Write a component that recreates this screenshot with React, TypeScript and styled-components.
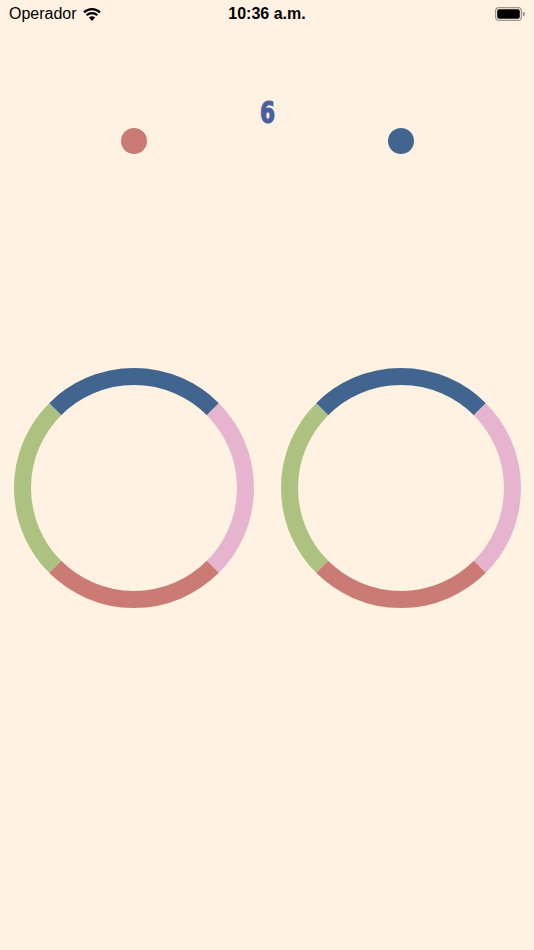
import React from "react";
import styled, { createGlobalStyle } from "styled-components";

const GlobalStyle = createGlobalStyle`
  html, body {
    margin: 0;
    padding: 0;
    background: #fff2e3;
  }
  body {
    font-family: "Liberation Sans", Arial, sans-serif;
  }
`;

const Screen = styled.div`
  width: 534px;
  height: 950px;
  background: #fff2e3;
  display: flex;
  flex-direction: column;
  overflow: hidden;
`;

const StatusBar = styled.div`
  height: 28px;
  display: grid;
  grid-template-columns: 1fr auto 1fr;
  align-items: center;
  padding: 0 9px;
  font-size: 16px;
  color: #000;
`;

const Carrier = styled.div`
  display: flex;
  align-items: center;
  gap: 6px;
`;

const Clock = styled.div`
  font-weight: bold;
`;

const BatteryWrap = styled.div`
  display: flex;
  justify-content: flex-end;
  align-items: center;
`;

const Score = styled.div`
  margin-top: 70px;
  display: flex;
  justify-content: center;
  font-family: "DejaVu Sans Condensed", "DejaVu Sans", sans-serif;
  font-weight: 900;
  font-size: 30px;
  line-height: 30px;
  color: #4a60a0;
`;

const Digit = styled.span`
  display: inline-block;
  transform: scaleX(0.8);
  -webkit-text-stroke: 1.2px #4a60a0;
`;

const Row = styled.div<{ $top: number }>`
  margin-top: ${(p) => p.$top}px;
  display: grid;
  grid-template-columns: 1fr 1fr;
  justify-items: center;
`;

const Dot = styled.div<{ $color: string }>`
  width: 26px;
  height: 26px;
  border-radius: 50%;
  background: ${(p) => p.$color};
`;

const RingSvg = styled.svg`
  display: block;
  width: 240px;
  height: 240px;
`;

const COLORS = {
  blue: "#42658f",
  pink: "#e6b4cf",
  red: "#c97b74",
  green: "#adc281",
};

const arc = (cx: number, cy: number, r: number, a0: number, a1: number) => {
  const rad = (a: number) => ((a - 90) * Math.PI) / 180;
  const x0 = cx + r * Math.cos(rad(a0));
  const y0 = cy + r * Math.sin(rad(a0));
  const x1 = cx + r * Math.cos(rad(a1));
  const y1 = cy + r * Math.sin(rad(a1));
  return `M ${x0} ${y0} A ${r} ${r} 0 0 1 ${x1} ${y1}`;
};

const Ring: React.FC = () => {
  const segments = [
    { from: -45, to: 45, color: COLORS.blue },
    { from: 45, to: 135, color: COLORS.pink },
    { from: 135, to: 225, color: COLORS.red },
    { from: 225, to: 315, color: COLORS.green },
  ];
  return (
    <RingSvg viewBox="0 0 240 240">
      {segments.map((s) => (
        <path
          key={s.from}
          d={arc(120, 120, 111.5, s.from, s.to)}
          fill="none"
          stroke={s.color}
          strokeWidth={17}
        />
      ))}
    </RingSvg>
  );
};

const Wifi = () => (
  <svg width="18" height="13" viewBox="0 0 18 13">
    <path d="M9 13 L5.9 9.6 A4.6 4.6 0 0 1 12.1 9.6 Z" fill="#000" />
    <path
      d="M3.6 7.2 A7.8 7.8 0 0 1 14.4 7.2"
      stroke="#000"
      strokeWidth="2.2"
      fill="none"
    />
    <path
      d="M1 4.4 A11.5 11.5 0 0 1 17 4.4"
      stroke="#000"
      strokeWidth="2.2"
      fill="none"
    />
  </svg>
);

const Battery = () => (
  <svg width="30" height="14" viewBox="0 0 30 14">
    <rect x="0.6" y="0.6" width="25.8" height="12.8" rx="3.5" fill="none" stroke="#9d9589" strokeWidth="1.2" />
    <rect x="2.2" y="2.2" width="22.6" height="9.6" rx="2" fill="#000" />
    <path d="M27.8 4.8 A2.2 2.2 0 0 1 27.8 9.2 Z" fill="#9d9589" />
  </svg>
);

const App: React.FC = () => {
  return (
    <>
      <GlobalStyle />
      <Screen>
        <StatusBar>
          <Carrier>
            Operador <Wifi />
          </Carrier>
          <Clock>10:36 a.m.</Clock>
          <BatteryWrap>
            <Battery />
          </BatteryWrap>
        </StatusBar>
        <Score>
          <Digit>6</Digit>
        </Score>
        <Row $top={0}>
          <Dot $color={COLORS.red} />
          <Dot $color={COLORS.blue} />
        </Row>
        <Row $top={214}>
          <Ring />
          <Ring />
        </Row>
      </Screen>
    </>
  );
};

export default App;
